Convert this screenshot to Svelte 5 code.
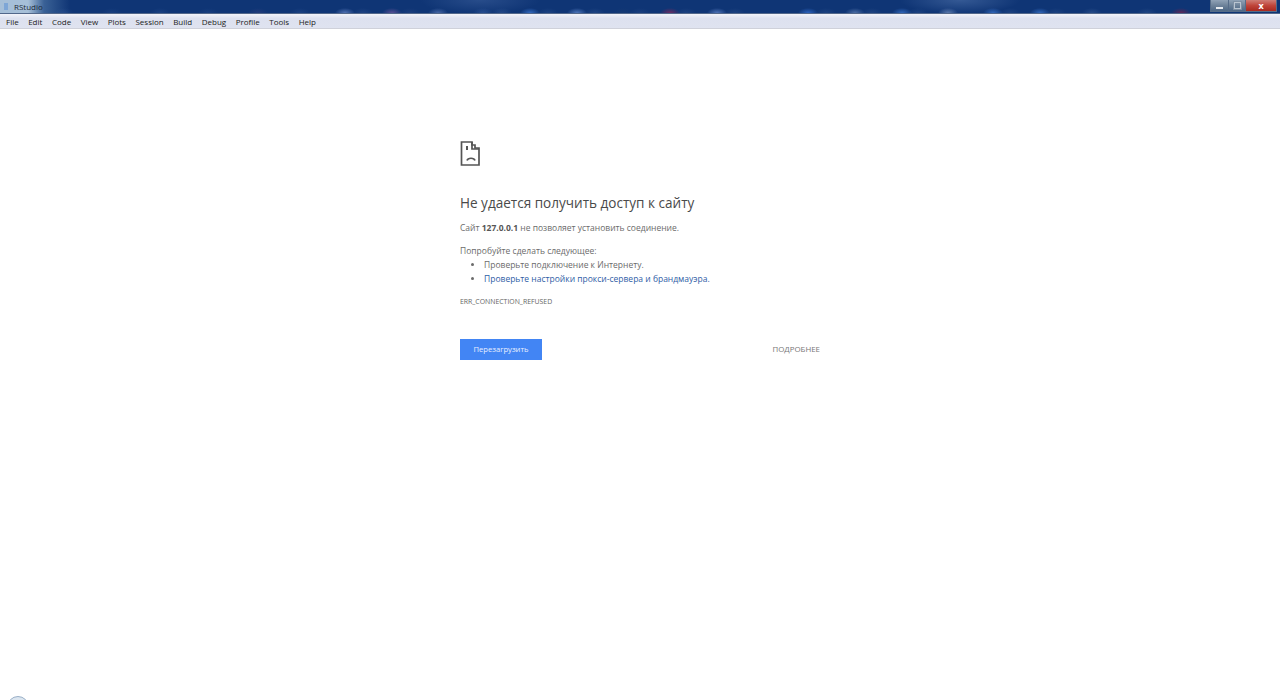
<script lang="ts">
  const menus = ["File", "Edit", "Code", "View", "Plots", "Session", "Build", "Debug", "Profile", "Tools", "Help"];

  // blurred taskbar-like spots showing through the glass title bar: [x, r, g, b, alpha]
  const spots = [
    [64, 60, 100, 170, 0.25], [112, 60, 100, 170, 0.18], [160, 70, 110, 180, 0.2], [208, 60, 100, 170, 0.18],
    [258, 120, 90, 150, 0.18], [300, 70, 110, 180, 0.2],
    [345, 110, 140, 205, 0.7], [363, 90, 120, 180, 0.2], [392, 120, 90, 160, 0.7], [410, 80, 100, 160, 0.18],
    [438, 100, 130, 190, 0.65], [483, 70, 110, 180, 0.4], [502, 80, 115, 175, 0.3], [530, 60, 120, 210, 0.8],
    [548, 80, 120, 180, 0.2], [577, 100, 140, 210, 0.75], [595, 90, 125, 180, 0.2], [623, 40, 70, 110, 0.25],
    [640, 70, 100, 160, 0.2], [670, 140, 40, 90, 0.75], [686, 80, 110, 170, 0.2], [717, 100, 135, 205, 0.75],
    [735, 90, 120, 170, 0.18], [808, 50, 110, 210, 0.8], [826, 80, 115, 170, 0.2], [855, 110, 140, 190, 0.65],
    [872, 90, 120, 170, 0.2], [902, 60, 120, 210, 0.75], [918, 80, 115, 170, 0.2], [948, 130, 155, 200, 0.65],
    [993, 60, 120, 210, 0.75], [1010, 80, 115, 170, 0.2], [1040, 60, 120, 210, 0.75], [1056, 80, 115, 170, 0.2],
    [1092, 80, 115, 170, 0.35], [1147, 80, 115, 170, 0.25], [1181, 140, 30, 70, 0.65],
  ];

  const titleBackground = [
    ...spots.map(([x, r, g, b, a]) =>
      `radial-gradient(ellipse 10px 5px at ${x}px 13px, rgba(${r}, ${g}, ${b}, ${a}), transparent)`),
    "radial-gradient(ellipse 60px 14px at 480px 0, rgba(70, 105, 165, 0.45), transparent)",
    "radial-gradient(ellipse 60px 14px at 960px 0, rgba(90, 125, 180, 0.5), transparent)",
    "linear-gradient(90deg, #a6bfd8 0, #a6bfd8 28px, #3a6196 44px, #0f3575 70px)",
  ].join(", ");
</script>

<div class="window">
  <header class="titlebar" style="background: {titleBackground}">
    <div class="title">
      <span class="app-icon"></span>
      <span>RStudio</span>
    </div>
    <div class="controls">
      <span class="ctl min"><i></i></span>
      <span class="ctl restore"><i></i></span>
      <span class="ctl close">x</span>
    </div>
  </header>

  <nav class="menubar">
    {#each menus as m}
      <span>{m}</span>
    {/each}
  </nav>

  <main class="page">
    <div class="error">
      <svg class="sad" width="20" height="25" viewBox="0 0 20 25" fill="none" stroke="#555" stroke-width="2">
        <path d="M1.5 1H12V4H15V7H19V24H1.5Z" stroke-width="1.7" />
        <path d="M12 1V8H19" stroke-width="1.7" />
        <path d="M7 5V9" stroke-width="2" />
        <path d="M7 19.5C8 16.5 14 16.5 15 19.5" stroke-width="1.7" />
      </svg>

      <h1>Не удается получить доступ к сайту</h1>
      <p class="lead">Сайт <b>127.0.0.1</b> не позволяет установить соединение.</p>

      <p class="try">Попробуйте сделать следующее:</p>
      <ul>
        <li>Проверьте подключение к Интернету.</li>
        <li><a href="#proxy">Проверьте настройки прокси-сервера и брандмауэра.</a></li>
      </ul>
      <p class="code">ERR_CONNECTION_REFUSED</p>

      <div class="actions">
        <button class="reload">Перезагрузить</button>
        <button class="details">ПОДРОБНЕЕ</button>
      </div>
    </div>
  </main>

  <div class="corner"></div>
</div>

<style>
  :global(body) {
    background: #fff;
    font-family: "Open Sans", "Noto Sans", sans-serif;
    overflow: hidden;
  }

  .window {
    position: relative;
    height: 700px;
    overflow: hidden;
  }

  .titlebar {
    height: 13px;
    display: flex;
    justify-content: space-between;
    border-bottom: 1px solid #52678a;
    box-sizing: content-box;
  }

  .title {
    display: flex;
    align-items: center;
    gap: 6px;
    padding-left: 4px;
    font-size: 8px;
    color: #1c2a38;
  }

  .app-icon {
    width: 4px;
    height: 7px;
    background: #7ea6d6;
    flex: none;
  }

  .controls {
    display: flex;
    margin-right: 3px;
  }

  .ctl {
    display: flex;
    align-items: center;
    justify-content: center;
    height: 12px;
    border: 1px solid #566c88;
    border-top: 0;
    box-sizing: border-box;
    background: linear-gradient(#90a2b6, #6d8299 50%, #4d6785);
  }

  .min { width: 19px; }
  .min i { display: block; width: 7px; height: 2px; margin-top: 5px; background: #e8ecf0; }
  .restore { width: 17px; border-left: 0; }
  .restore i { display: block; width: 5px; height: 5px; border: 1px solid #b9c4d0; outline: 1px solid #7e90a4; }
  .close {
    width: 31px;
    border-left: 0;
    font-size: 9px;
    font-weight: 700;
    line-height: 1;
    color: #fff;
    background: linear-gradient(#cf7d75, #c0453a 50%, #a8291f);
  }

  .menubar {
    height: 14px;
    display: flex;
    align-items: center;
    padding-left: 6px;
    font-size: 8px;
    color: #222;
    background: linear-gradient(#f3f4fa, #dde1ef 30%, #dfe3f0);
    border-bottom: 1px solid #cfd1da;
  }

  .menubar span { margin-right: 9.5px; }

  .page {
    color: #6b6b6b;
    font-size: 8.5px;
    line-height: 14px;
  }

  .error {
    width: 360px;
    margin: 0 auto;
    padding-top: 112px;
  }

  .sad { display: block; }

  h1 {
    margin: 27px 0 0;
    font-size: 13.55px;
    font-weight: 400;
    line-height: 20px;
    color: #4a4a4a;
  }

  .lead { margin: 8px 0 0; }
  .lead b { color: #555; }
  .try { margin: 9px 0 0; }

  ul {
    margin: 0;
    padding-left: 24px;
  }

  a {
    color: #2f5da6;
    text-decoration: none;
  }

  .code {
    margin: 9px 0 0;
    font-size: 6.9px;
    color: #666;
  }

  .actions {
    display: flex;
    justify-content: space-between;
    align-items: center;
    margin-top: 30px;
  }

  button {
    border: 0;
    font: inherit;
    padding: 0;
    background: none;
  }

  .reload {
    width: 82px;
    height: 21px;
    padding-bottom: 2px;
    font-size: 7.6px;
    color: #e8f0ff;
    background: #4285f4;
  }

  .details {
    padding-bottom: 2px;
    font-size: 7.9px;
    color: #777;
  }

  .corner {
    position: absolute;
    left: 7px;
    top: 696px;
    width: 22px;
    height: 22px;
    border-radius: 50%;
    border: 1px solid #9ab0c8;
    box-sizing: border-box;
    background: #dce6f0;
  }
</style>
